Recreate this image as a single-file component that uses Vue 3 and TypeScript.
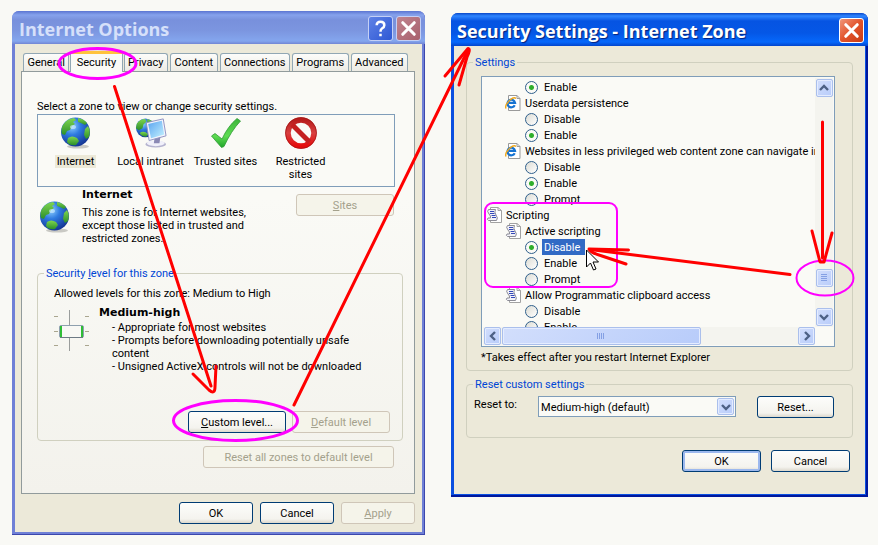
<script setup lang="ts">
import { ref } from 'vue'

interface Zone { id: string; label: string; icon: 'globe' | 'intranet' | 'check' | 'blocked' }
interface Row { kind: 'ie' | 'script' | 'root' | 'option'; label: string; group?: string }

const tabs: string[] = ['General', 'Security', 'Privacy', 'Content', 'Connections', 'Programs', 'Advanced']
const activeTab = ref('Security')

const zones: Zone[] = [
  { id: 'internet', label: 'Internet', icon: 'globe' },
  { id: 'intranet', label: 'Local intranet', icon: 'intranet' },
  { id: 'trusted', label: 'Trusted sites', icon: 'check' },
  { id: 'restricted', label: 'Restricted sites', icon: 'blocked' },
]
const activeZone = ref('internet')

const rows: Row[] = [
  { kind: 'option', label: 'Enable', group: 'submit' },
  { kind: 'ie', label: 'Userdata persistence' },
  { kind: 'option', label: 'Disable', group: 'userdata' },
  { kind: 'option', label: 'Enable', group: 'userdata' },
  { kind: 'ie', label: 'Websites in less privileged web content zone can navigate in' },
  { kind: 'option', label: 'Disable', group: 'navigate' },
  { kind: 'option', label: 'Enable', group: 'navigate' },
  { kind: 'option', label: 'Prompt', group: 'navigate' },
  { kind: 'root', label: 'Scripting' },
  { kind: 'script', label: 'Active scripting' },
  { kind: 'option', label: 'Disable', group: 'scripting' },
  { kind: 'option', label: 'Enable', group: 'scripting' },
  { kind: 'option', label: 'Prompt', group: 'scripting' },
  { kind: 'script', label: 'Allow Programmatic clipboard access' },
  { kind: 'option', label: 'Disable', group: 'clipboard' },
  { kind: 'option', label: 'Enable', group: 'clipboard' },
]
const chosen = ref<Record<string, string>>({
  submit: 'Enable',
  userdata: 'Enable',
  navigate: 'Enable',
  scripting: 'Disable',
  clipboard: '',
})
const resetLevel = ref('Medium-high (default)')
</script>

<template>
  <main class="desktop">
    <svg class="defs" width="0" height="0" aria-hidden="true">
      <defs>
        <radialGradient id="sea" cx="0.38" cy="0.3" r="0.75">
          <stop offset="0" stop-color="#8fd0ff" />
          <stop offset="0.4" stop-color="#2f7be0" />
          <stop offset="1" stop-color="#12308e" />
        </radialGradient>
        <linearGradient id="land" x1="0" y1="0" x2="0" y2="1">
          <stop offset="0" stop-color="#7fd64f" />
          <stop offset="1" stop-color="#2c8f2a" />
        </linearGradient>
        <linearGradient id="screen" x1="0" y1="0" x2="1" y2="1">
          <stop offset="0" stop-color="#5aa4f0" />
          <stop offset="1" stop-color="#c4f2ff" />
        </linearGradient>
        <linearGradient id="tick" x1="0" y1="0" x2="0" y2="1">
          <stop offset="0" stop-color="#3cb43a" />
          <stop offset="0.6" stop-color="#5fdc52" />
          <stop offset="1" stop-color="#1fa42a" />
        </linearGradient>
        <linearGradient id="ban" x1="0" y1="0" x2="0" y2="1">
          <stop offset="0" stop-color="#b81c1c" />
          <stop offset="0.5" stop-color="#d84040" />
          <stop offset="1" stop-color="#e60c0c" />
        </linearGradient>
        <symbol id="globe" viewBox="0 0 32 32">
          <ellipse cx="18" cy="29.500" rx="11" ry="2" fill="#c9c9c4" />
          <circle cx="15.500" cy="15" r="14.500" fill="url(#sea)" />
          <path d="M3 8 Q7 1.500 14 1 L16 3 L13 5 L15 7 L12 9 L10 13 L7 14 L5 18 L2 17 Q0.500 12 3 8Z" fill="url(#land)" />
          <path d="M18 1 Q24 2 27 6 L25 8 L21 6 L18 5Z" fill="url(#land)" />
          <path d="M25 12 L28 9 Q31 14 29 20 L26 22 L24 18Z" fill="url(#land)" />
          <path d="M8 21 Q12 18 17 21 L19 24 L16 28 Q10 29 7 25Z" fill="url(#land)" />
          <ellipse cx="13" cy="10" rx="3" ry="2" fill="#d8f2ff" opacity="0.6" />
        </symbol>
        <symbol id="intranet" viewBox="0 0 34 32">
          <circle cx="11" cy="10.500" r="10" fill="url(#sea)" />
          <path d="M2 6 Q5 1 11 1 L12 4 L9 7 L8 11 L4 13 L1 11Z" fill="url(#land)" />
          <path d="M5 16 Q9 13 14 17 L12 20 Q7 20 5 16Z" fill="url(#land)" />
          <path d="M13 1 L18 3 L17 6 L13 5Z" fill="url(#land)" />
          <ellipse cx="22" cy="28" rx="11" ry="3.500" fill="#b4b3cf" />
          <ellipse cx="22" cy="27" rx="9.500" ry="3" fill="#f0f0fa" />
          <path d="M21 20 H27 L26 27 H20Z" fill="#8a89b4" />
          <path d="M12 5 L30 1 L33 19 L15 24Z" fill="#f2f4fc" stroke="#8d90c0" />
          <path d="M14 6.500 L28.500 3 L31 17.500 L17 21.500Z" fill="url(#screen)" />
        </symbol>
        <symbol id="check" viewBox="0 0 32 32">
          <path d="M1.500 19 L5 16.500 L12 22 Q18 9 27 1.500 L30.500 4 Q21 14 14 29.500 L11.500 30.500Z" fill="url(#tick)" stroke="#2f9a35" stroke-width="0.800" />
        </symbol>
        <symbol id="blocked" viewBox="0 0 32 32">
          <circle cx="16" cy="16" r="13" fill="none" stroke="url(#ban)" stroke-width="5.500" />
          <path d="M7 7.500 L24.500 25" stroke="#c42020" stroke-width="5" />
          <circle cx="16" cy="16" r="15.500" fill="none" stroke="#9e1616" stroke-width="0.700" />
        </symbol>
        <symbol id="ie" viewBox="0 0 16 16">
          <path d="M3.500 0.500 H12 L15 3.500 V15.500 H3.500Z" fill="#fff" stroke="#9a9a9a" />
          <path d="M12 0.500 V3.500 H15" fill="none" stroke="#9a9a9a" />
          <path d="M9.700 10.200 A3.800 3.800 0 1 1 10 7.800 H4" fill="none" stroke="#1673d2" stroke-width="2.200" />
          <path d="M1 13.500 Q-0.500 10 5 5 Q9 1.500 11 3.500" fill="none" stroke="#f0a81c" stroke-width="1.400" />
        </symbol>
        <symbol id="script" viewBox="0 0 16 16">
          <path d="M4.500 0.500 H12 L15.500 3.500 V15.500 H4.500Z" fill="#fff" stroke="#a2a2a2" />
          <path d="M12 0.500 V3.500 H15.500" fill="none" stroke="#a2a2a2" />
          <path d="M2.500 2.500 H9.500 Q8 5 10 8 Q12.500 11 10.500 13.500 H2.500 Q0.500 12.500 2 11 H4.500 Q5 9 3 7 Q0.500 4 2.500 2.500Z" fill="#f1f1f8" stroke="#8c8c96" />
          <path d="M4 4.500 H8 M4 6.500 H8.500 M5.500 8.500 H9.500 M6 10.500 H10" stroke="#3347b8" />
        </symbol>
      </defs>
    </svg>

    <section class="window inactive" aria-label="Internet Options">
      <header class="titlebar">
        <h1>Internet Options</h1>
        <button class="caption help" type="button" aria-label="Help">
          <svg viewBox="0 0 24 24"><path d="M8 8.500 Q8 5 12 5 Q16 5 16 8.500 Q16 10.500 13.500 12 Q12 13 12 15.500 M12 17.500 V20" fill="none" stroke="#fff" stroke-width="2.600" /></svg>
        </button>
        <button class="caption close" type="button" aria-label="Close">
          <svg viewBox="0 0 24 24"><path d="M6 6 L18 18 M18 6 L6 18" stroke="#fff" stroke-width="3.200" stroke-linecap="round" /></svg>
        </button>
      </header>

      <div class="client">
        <div class="tabs" role="tablist">
          <button
            v-for="tab in tabs" :key="tab" class="tab" :class="{ active: tab === activeTab }"
            type="button" role="tab" :aria-selected="tab === activeTab" @click="activeTab = tab"
          >{{ tab }}</button>
        </div>

        <div class="panel" role="tabpanel">
          <p class="hint">Select a zone to view or change security settings.</p>
          <div class="zones">
            <button
              v-for="zone in zones" :key="zone.id" class="zone" :class="{ active: zone.id === activeZone }"
              type="button" @click="activeZone = zone.id"
            >
              <svg class="zone-icon"><use :href="'#' + zone.icon" /></svg>
              <span>{{ zone.label }}</span>
            </button>
          </div>

          <div class="zone-info">
            <svg class="zone-icon"><use href="#globe" /></svg>
            <div class="zone-text">
              <h2>Internet</h2>
              <p>This zone is for Internet websites, except those listed in trusted and restricted zones.</p>
            </div>
            <button class="btn wide" type="button" disabled><u>S</u>ites</button>
          </div>

          <fieldset class="level">
            <legend>Security <u>l</u>evel for this zone</legend>
            <p>Allowed levels for this zone: Medium to High</p>
            <div class="level-body">
              <svg class="slider" viewBox="0 0 36 42" aria-hidden="true">
                <path d="M15.500 0 V41" stroke="#9a9d9c" />
                <path d="M0 6.500 H4 M31 6.500 H35 M0 21.500 H4 M31 21.500 H35 M0 35.500 H4 M31 35.500 H35" stroke="#aaa68f" />
                <rect x="5.500" y="15.500" width="24" height="12" rx="1.500" fill="#f8f8f4" stroke="#8ea0ae" />
                <path d="M7 16 V27 M28 16 V27" stroke="#2fbd36" stroke-width="2" />
                <path d="M6 27.500 H29" stroke="#6d7a84" />
              </svg>
              <div class="level-text">
                <h2>Medium-high</h2>
                <ul>
                  <li>- Appropriate for most websites</li>
                  <li>- Prompts before downloading potentially unsafe content</li>
                  <li>- Unsigned ActiveX controls will not be downloaded</li>
                </ul>
              </div>
            </div>
            <div class="level-actions">
              <button class="btn wide" type="button"><u>C</u>ustom level...</button>
              <button class="btn wide" type="button" disabled><u>D</u>efault level</button>
            </div>
          </fieldset>
          <button class="btn reset-all" type="button" disabled>Reset all zones to default level</button>
        </div>

        <footer class="actions">
          <button class="btn" type="button">OK</button>
          <button class="btn" type="button">Cancel</button>
          <button class="btn" type="button" disabled><u>A</u>pply</button>
        </footer>
      </div>
    </section>

    <section class="window focused" aria-label="Security Settings - Internet Zone">
      <header class="titlebar">
        <h1>Security Settings - Internet Zone</h1>
        <button class="caption close" type="button" aria-label="Close">
          <svg viewBox="0 0 24 24"><path d="M6 6 L18 18 M18 6 L6 18" stroke="#fff" stroke-width="3.200" stroke-linecap="round" /></svg>
        </button>
      </header>

      <div class="client">
        <fieldset class="settings">
          <legend>Settings</legend>
          <div class="listbox">
            <div class="rows">
              <template v-for="(row, i) in rows" :key="i">
                <label v-if="row.kind === 'option'" class="row option" :class="{ selected: row.group === 'scripting' && chosen.scripting === row.label }">
                  <input v-model="chosen[row.group!]" type="radio" :name="row.group" :value="row.label">
                  <span>{{ row.label }}</span>
                </label>
                <div v-else class="row" :class="row.kind">
                  <svg class="row-icon" aria-hidden="true"><use :href="row.kind === 'ie' ? '#ie' : '#script'" /></svg>
                  <span>{{ row.label }}</span>
                </div>
              </template>
            </div>
            <div class="vbar">
              <button class="sb" type="button" aria-label="Scroll up"><svg viewBox="0 0 16 16"><path d="M4 10 L8 6 L12 10" /></svg></button>
              <button class="sb thumb" type="button" aria-label="Vertical thumb"><svg viewBox="0 0 16 16"><path d="M5 4.500 H11 M5 6.500 H11 M5 8.500 H11 M5 10.500 H11" /></svg></button>
              <button class="sb" type="button" aria-label="Scroll down"><svg viewBox="0 0 16 16"><path d="M4 6 L8 10 L12 6" /></svg></button>
            </div>
            <div class="hbar">
              <button class="sb" type="button" aria-label="Scroll left"><svg viewBox="0 0 16 16"><path d="M10 4 L6 8 L10 12" /></svg></button>
              <button class="sb thumb" type="button" aria-label="Horizontal thumb"><svg viewBox="0 0 16 16"><path d="M4.500 5 V11 M6.500 5 V11 M8.500 5 V11 M10.500 5 V11" /></svg></button>
              <button class="sb" type="button" aria-label="Scroll right"><svg viewBox="0 0 16 16"><path d="M6 4 L10 8 L6 12" /></svg></button>
            </div>
          </div>
          <p>*Takes effect after you restart Internet Explorer</p>
        </fieldset>

        <fieldset class="reset">
          <legend>Reset custom settings</legend>
          <label for="reset-level">Reset to:</label>
          <div class="combo">
            <select id="reset-level" v-model="resetLevel">
              <option>Medium-high (default)</option>
              <option>Medium</option>
              <option>High</option>
            </select>
            <span class="sb" aria-hidden="true"><svg viewBox="0 0 16 16"><path d="M4 6 L8 10 L12 6" /></svg></span>
          </div>
          <button class="btn" type="button">Reset...</button>
        </fieldset>

        <footer class="actions">
          <button class="btn default" type="button">OK</button>
          <button class="btn" type="button">Cancel</button>
        </footer>
      </div>
    </section>

    <svg class="notes" viewBox="0 0 878 545" aria-hidden="true">
      <path d="M586.500 250 V267 L590.500 263 L593.500 270 L596 269 L593 262 H598.500Z" fill="#fff" stroke="#000" />
      <g fill="none" stroke="#ff00ff" stroke-width="3">
        <ellipse cx="97.500" cy="63.500" rx="38.500" ry="15" />
        <ellipse cx="235.500" cy="420.500" rx="62" ry="20" />
        <ellipse cx="825" cy="278" rx="28.500" ry="17.500" stroke-width="2" />
        <rect x="485" y="203" width="132" height="84" rx="8" stroke-width="2" />
      </g>
      <g fill="none" stroke="#ff0000" stroke-width="3" stroke-linecap="round" stroke-linejoin="round">
        <path d="M114.500 86.500 L211 386" />
        <path d="M193 374 L209 390 Q215 395 215 387 L216 366" />
        <path d="M294 405 L468 50" />
        <path d="M445 76 L468 48.500 Q471 49 467 57 L459 85" />
        <path d="M822.500 122 V258" />
        <path d="M812 231 L820 262 H824 L832 233" />
        <path d="M790 274.500 L590 249.500" />
        <path d="M628.500 250 L589 249 Q591 253 602 256 L626 264" />
      </g>
    </svg>
  </main>
</template>

<style>
body {
  background: #f9f9f5;
}
</style>

<style scoped>
* {
  box-sizing: border-box;
}

.desktop {
  position: relative;
  display: flex;
  align-items: flex-start;
  gap: 26px;
  padding: 11px 10px 11px 12px;
  color: #000;
  font: 11px/13px Roboto, "Liberation Sans", sans-serif;
}

.defs {
  position: absolute;
}

.notes {
  position: absolute;
  top: 0;
  left: 0;
  width: 100%;
  pointer-events: none;
}

h1, h2, p, ul, fieldset {
  margin: 0;
  padding: 0;
}

button, select, input {
  margin: 0;
  padding: 0;
  color: inherit;
  font: inherit;
}

svg {
  display: block;
}

.window {
  flex: 413 1 0;
  min-width: 0;
  padding: 0 3px 3px;
  border-radius: 7px 7px 0 0;
  background: #6f80d6;
  box-shadow: inset -1px -1px #3c47ac;
}

.window.focused {
  flex-grow: 417;
  margin-top: 2px;
  background: #0a4fe0;
  box-shadow: inset -2px -2px #00179c;
}

.titlebar {
  display: flex;
  align-items: center;
  gap: 3px;
  height: 33px;
  margin: 0 -3px;
  padding: 2px 4px 0 7px;
  border-radius: 7px 7px 0 0;
  background: linear-gradient(#5b74d2, #86a2ec 4px, #7890dc 9px, #7c96e0 20px, #84a6ee 30px, #7286d4);
}

.focused .titlebar {
  padding-left: 6px;
  background: linear-gradient(#0a48c8, #2f86ff 3px, #0654e2 8px, #0557e6 20px, #0668fb 29px, #0345cc);
}

h1 {
  flex: 1;
  min-width: 0;
  color: #d6e0fa;
  font: bold 18px/24px "Open Sans", sans-serif;
  white-space: nowrap;
}

.focused h1 {
  color: #fff;
  text-shadow: 1px 1px 1px #06217c;
}

.caption {
  width: 25px;
  height: 25px;
  border: 1px solid #c4d0f6;
  border-radius: 3px;
}

.caption svg {
  width: 23px;
  height: 23px;
}

.help {
  background: linear-gradient(135deg, #5f82e6, #2e58d4);
}

.close {
  background: linear-gradient(135deg, #c08490, #a8606c);
}

.focused .close {
  border-color: #fff;
  background: linear-gradient(135deg, #f0977c, #e2532c 50%, #c83c14);
}

.client {
  padding: 7px 7px 8px 6px;
  background: #ece9d9;
}

.tabs {
  display: flex;
  align-items: flex-end;
  gap: 2px;
  height: 20px;
  padding: 0 7px 0 2px;
}

.tab {
  flex: 1 1 auto;
  height: 18px;
  padding: 0 3px;
  border: 1px solid #91a7b4;
  border-bottom: 0;
  border-radius: 3px 3px 0 0;
  background: linear-gradient(#fcfcfa, #ecebe4);
}

.tab.active {
  position: relative;
  height: 21px;
  margin: 0 -1px;
  margin-bottom: -1px;
  padding: 0 5px 2px;
  border-top: 3px solid #ffc33c;
  background: #fafaf6;
}

.panel {
  padding: 28px 11px 25px 15px;
  border: 1px solid #919b9c;
  background: linear-gradient(#fafaf6 30%, #f3f2ec);
}

.zones {
  display: flex;
  margin: 1px 8px 0 0;
  height: 73px;
  padding: 2px 0 0;
  border: 1px solid #7f9db9;
  background: #fafaf6;
}

.zone {
  display: flex;
  flex-direction: column;
  align-items: center;
  gap: 6px;
  width: 75px;
  border: 0;
  background: none;
}

.zone span {
  padding: 0 2px;
}

.zone:not(:last-child) span {
  white-space: nowrap;
}

.zone.active span {
  background: #ece9d8;
}

.zone-icon {
  flex: none;
  width: 32px;
  height: 32px;
}

.zone-info {
  display: flex;
  align-items: flex-start;
  gap: 11px;
  margin: 1px 9px 0 2px;
}

.zone-info .zone-icon {
  margin-top: 13px;
}

.zone-text {
  flex: 1;
}

h2 {
  font: bold 11px/13px "DejaVu Sans", sans-serif;
}

.zone-text p {
  max-width: 176px;
  margin-top: 5px;
}

.zone-info .btn {
  margin-top: 6px;
}

fieldset {
  min-width: 0;
  border: 1px solid #d0d0bf;
  border-radius: 4px;
}

legend {
  padding: 2px 2px 0;
  color: #0046d5;
  line-height: 14px;
}

.level {
  margin-top: 20px;
  padding: 6px 12px 7px 16px;
}

.level legend {
  margin-left: -10px;
}

.level-body {
  display: flex;
  gap: 9px;
  margin-top: 6px;
}

.slider {
  flex: none;
  width: 36px;
  height: 42px;
  margin-top: 4px;
}

ul {
  margin-top: 2px;
  padding-left: 13px;
  list-style: none;
}

li {
  max-width: 250px;
}

.level-actions {
  display: flex;
  justify-content: flex-end;
  gap: 6px;
  margin-top: 38px;
}

.btn {
  width: 74px;
  height: 22px;
  border: 1px solid #003c74;
  border-radius: 3px;
  background: linear-gradient(#fdfdfb, #f4f3ee 80%, #dcd8cc);
  text-align: center;
}

.btn:disabled {
  border-color: #cfc6b8;
  background: #f5f4ea;
  color: #a4a18c;
}

.btn.wide {
  width: 98px;
}

.reset-all {
  display: block;
  width: 191px;
  margin: 5px 9px 0 auto;
}

.actions {
  display: flex;
  justify-content: flex-end;
  gap: 7px;
  margin-top: 8px;
}

.focused .client {
  padding: 8px 12px 22px;
}

.settings {
  padding: 6px 17px 6px 14px;
}

.settings legend {
  margin-left: -8px;
}

.listbox {
  display: grid;
  grid-template: 249px 18px / 1fr 18px;
  padding: 1px;
  border: 1px solid #7f9db9;
  background: #fafaf6;
}

.rows {
  padding-top: 1px;
  overflow: hidden;
}

.row {
  display: flex;
  align-items: center;
  gap: 4px;
  height: 16px;
  padding-left: 22px;
  white-space: nowrap;
}

.row.root {
  padding-left: 3px;
}

.row.option {
  padding-left: 42px;
}

.row-icon {
  flex: none;
  width: 16px;
  height: 16px;
}

.option span {
  padding: 2px 5px 1px 2px;
}

.option.selected span {
  background: #316ac5;
  color: #fff;
}

input[type="radio"] {
  appearance: none;
  width: 13px;
  height: 13px;
  border: 1px solid #2f5f8c;
  border-radius: 50%;
  background: linear-gradient(135deg, #dcdcd4, #fff);
}

input[type="radio"]:checked {
  background: radial-gradient(circle, #2fae2c 2px, #fafaf6 3px);
}

.vbar, .hbar {
  display: flex;
  background: #f4f4ef;
}

.vbar {
  flex-direction: column;
  align-items: center;
  padding-top: 1px;
  padding-bottom: 1px;
}

.vbar .thumb {
  margin: auto 0 21px;
}

.hbar {
  padding-left: 1px;
}

.hbar .thumb {
  flex: 0 0 60%;
  margin: 0 auto 0 1px;
}

.sb {
  display: flex;
  flex: none;
  align-items: center;
  justify-content: center;
  width: 17px;
  height: 18px;
  border: 1px solid #aabfec;
  border-radius: 2px;
  background: linear-gradient(135deg, #d2defc, #b8ccfa);
  box-shadow: inset 0 0 0 1px #e4ecff;
}

.sb svg {
  flex: none;
  width: 16px;
  height: 16px;
}

.sb path {
  fill: none;
  stroke: #4d6185;
  stroke-width: 2.4;
}

.sb.thumb path {
  stroke: #84a0e4;
  stroke-width: 1;
}

.settings p {
  margin-top: 4px;
}

.reset {
  display: flex;
  align-items: flex-start;
  margin-top: 5px;
  padding: 4px 18px 19px 7px;
}

.reset label {
  width: 64px;
  margin-top: 2px;
}

.reset legend {
  margin-left: -1px;
}

.combo {
  position: relative;
  width: 198px;
}

.combo select {
  display: block;
  appearance: none;
  width: 100%;
  height: 21px;
  padding: 1px 0 0 2px;
  border: 1px solid #7f9db9;
  border-radius: 0;
  background: #fafaf6;
}

.combo .sb {
  position: absolute;
  top: 2px;
  right: 2px;
  height: 17px;
  pointer-events: none;
}

.reset .btn {
  width: 77px;
  margin-left: auto;
}

.focused .actions {
  gap: 10px;
  margin: 12px 3px 0 0;
}

.focused .actions .btn {
  width: 79px;
}

.btn.default {
  box-shadow: inset 0 0 0 2px #9cb8ee;
}
</style>
